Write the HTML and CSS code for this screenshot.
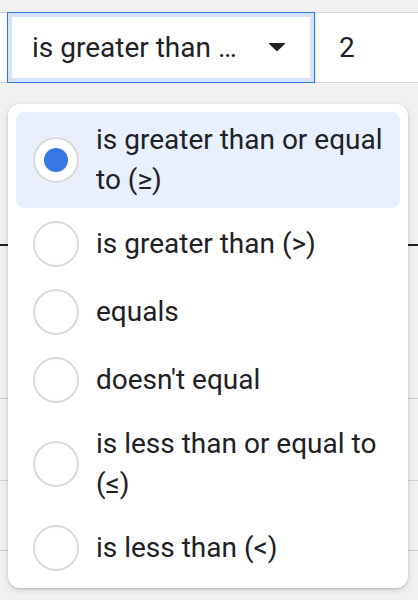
FILE: index.html
```html
<!DOCTYPE html>
<html lang="en">
<head>
<meta charset="utf-8">
<title>Filter condition</title>
<link rel="stylesheet" href="styles.css">
</head>
<body>
<div class="bar">
  <div class="select">
    <span class="select-label">is greater than …</span>
    <svg class="caret" width="18" height="10" viewBox="0 0 18 10"><path d="M1.5 1 H16.5 Q17.6 1 16.8 1.9 L9.8 8.8 Q9 9.6 8.2 8.8 L1.2 1.9 Q0.4 1 1.5 1 Z" fill="#202124"/></svg>
  </div>
  <div class="value">2</div>
</div>
<div class="sheet">
  <div class="sheet-row r1"></div>
  <div class="sheet-row r2"></div>
  <div class="sheet-row r3"></div>
  <div class="sheet-row r4"></div>
</div>
<div class="menu">
  <div class="option selected"><span class="radio-wrap"><span class="radio"><span class="dot"></span></span></span><span class="label">is greater than or equal to (≥)</span></div>
  <div class="option"><span class="radio-wrap"><span class="radio"></span></span><span class="label">is greater than (&gt;)</span></div>
  <div class="option"><span class="radio-wrap"><span class="radio"></span></span><span class="label">equals</span></div>
  <div class="option"><span class="radio-wrap"><span class="radio"></span></span><span class="label">doesn't equal</span></div>
  <div class="option"><span class="radio-wrap"><span class="radio"></span></span><span class="label">is less than or equal to (≤)</span></div>
  <div class="option"><span class="radio-wrap"><span class="radio"></span></span><span class="label">is less than (&lt;)</span></div>
</div>
</body>
</html>
```

FILE: styles.css
```css
html, body {
  margin: 0;
  padding: 0;
}
body {
  background: #f1f1f2;
  font-family: Roboto, "Noto Sans", Arial, sans-serif;
  color: #202124;
  font-size: 28px;
  line-height: 40px;
  position: relative;
  height: 600px;
  overflow: hidden;
}
.bar {
  margin-top: 12px;
  height: 71px;
  box-sizing: border-box;
  display: flex;
  background: #fff;
  border-top: 1px solid #d4d4d4;
  border-bottom: 1px solid #d4d4d4;
}
.select {
  margin: -1px 0 -1px 7px;
  width: 308px;
  box-sizing: border-box;
  border: 1px solid #3478e4;
  box-shadow: inset 0 0 0 4px #d4e2fa;
  display: flex;
  align-items: center;
  justify-content: space-between;
  padding: 0 28px 0 24px;
}
.select-label {
  white-space: nowrap;
}
.caret {
  display: block;
  margin-top: -2px;
}
.value {
  flex: 1;
  display: flex;
  align-items: center;
  padding-left: 23px;
  border-left: 1px solid #e2e2e2;
}
.sheet-row {
  box-sizing: content-box;
}
.r1 { height: 161px; border-bottom: 2px solid #202124; }
.r2 { height: 152px; border-bottom: 1px solid #d0d0d0; }
.r3 { height: 81px; border-bottom: 1px solid #d0d0d0; }
.r4 { height: 69px; border-bottom: 1px solid #d0d0d0; }
.menu {
  position: absolute;
  left: 8px;
  top: 104px;
  width: 400px;
  box-sizing: border-box;
  padding: 8px;
  background: #fff;
  border-radius: 12px;
  box-shadow: 0 2px 6px rgba(0,0,0,0.16), 0 1px 2px rgba(0,0,0,0.10);
  display: flex;
  flex-direction: column;
  gap: 4px;
}
.option {
  display: flex;
  align-items: center;
  padding: 8px 16px;
  border-radius: 8px;
}
.option.selected {
  background: #e8f0fe;
}
.radio-wrap {
  flex: none;
  width: 48px;
  height: 48px;
  display: flex;
  align-items: center;
  justify-content: center;
}
.radio {
  width: 46px;
  height: 46px;
  box-sizing: border-box;
  border: 2px solid #dadada;
  border-radius: 50%;
  background: #fff;
  display: flex;
  align-items: center;
  justify-content: center;
}
.dot {
  width: 24px;
  height: 24px;
  border-radius: 50%;
  background: #3a78e6;
}
.label {
  margin-left: 16px;
}
```
